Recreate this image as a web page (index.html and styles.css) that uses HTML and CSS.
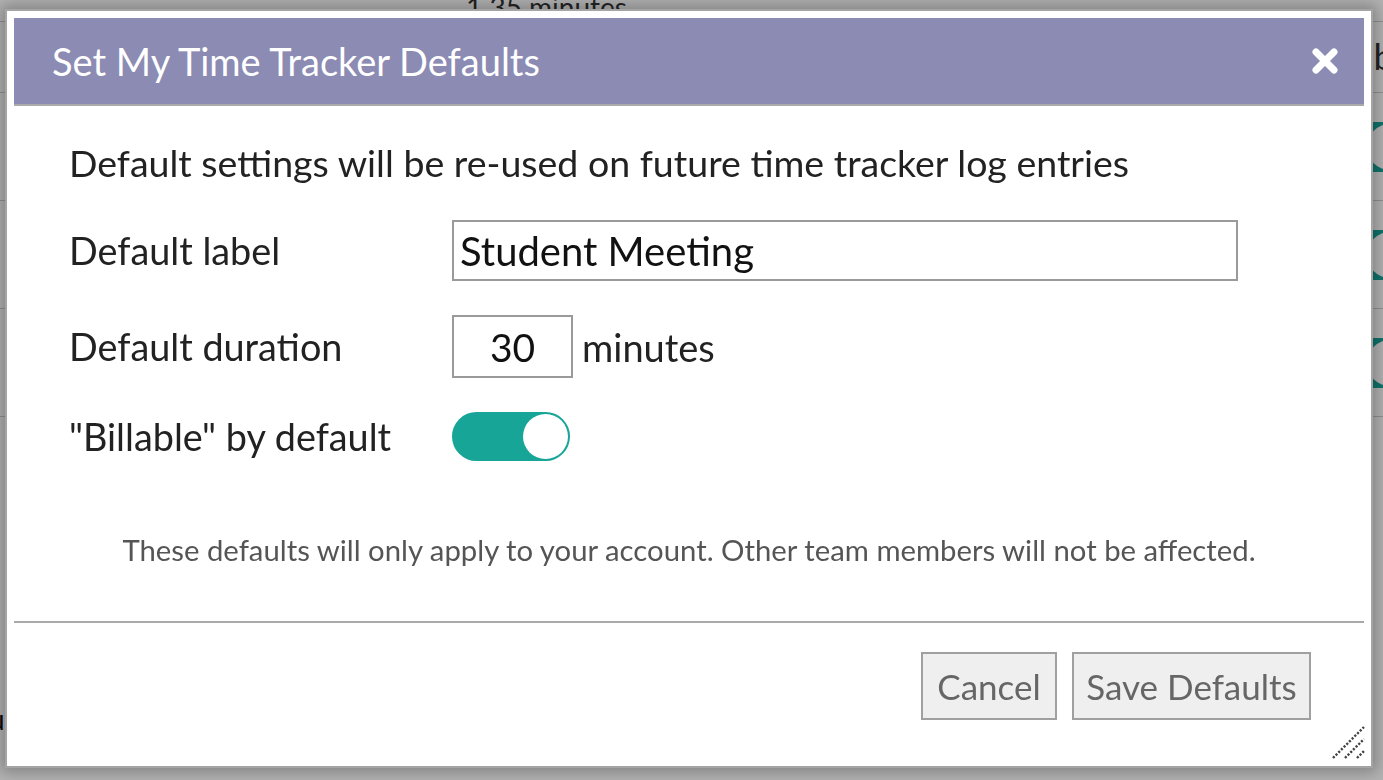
FILE: index.html
```html
<!DOCTYPE html>
<html lang="en">
<head>
<meta charset="utf-8">
<title>Set My Time Tracker Defaults</title>
<link rel="stylesheet" href="styles.css">
</head>
<body>
<div class="page">
  <div class="summary">1 35 minutes</div>
  <div class="rows">
    <div class="row head"><div class="main"></div><div class="side"><span class="colhead">Billable</span></div></div>
    <div class="row"><div class="main"></div><div class="side"><span class="sw"><span class="sw-knob"></span></span></div></div>
    <div class="row"><div class="main"></div><div class="side"><span class="sw"><span class="sw-knob"></span></span></div></div>
    <div class="row"><div class="main"></div><div class="side"><span class="sw"><span class="sw-knob"></span></span></div></div>
    <div class="tail"><span class="cut">u</span></div>
  </div>
</div>
<div class="overlay"></div>
<div class="dialog" role="dialog">
  <div class="titlebar">
    <span class="title">Set My Time Tracker Defaults</span>
    <button class="close" aria-label="Close">
      <svg width="26" height="26" viewBox="0 0 26 26"><path d="M4 4 L22 22 M22 4 L4 22" stroke="#fff" stroke-width="7" stroke-linecap="round" fill="none"/></svg>
    </button>
  </div>
  <div class="content">
    <p class="intro">Default settings will be re-used on future time tracker log entries</p>
    <div class="form">
      <label class="lbl">Default label</label>
      <div class="field"><input class="text" type="text" value="Student Meeting"></div>
      <label class="lbl">Default duration</label>
      <div class="field"><input class="num" type="text" value="30"><span class="unit">minutes</span></div>
      <label class="lbl">"Billable" by default</label>
      <div class="field"><span class="toggle"><span class="knob"></span></span></div>
    </div>
    <p class="note">These defaults will only apply to your account. Other team members will not be affected.</p>
  </div>
  <div class="footer">
    <button class="btn btn-cancel">Cancel</button>
    <button class="btn btn-save">Save Defaults</button>
  </div>
  <svg class="grip" width="34" height="34" viewBox="0 0 34 34">
    <path d="M1 32 L32 1 M13 32 L32 13 M25 32 L32 25" stroke="#444" stroke-width="2.4" stroke-dasharray="2.2 1.6" fill="none"/>
  </svg>
</div>
</body>
</html>
```
FILE: styles.css
```css
* { box-sizing: border-box; }
html, body { margin: 0; padding: 0; }
body {
  width: 1383px;
  height: 780px;
  overflow: hidden;
  background: #fff;
  font-family: Lato, "Open Sans", sans-serif;
  color: #222;
}

/* background page */
.summary {
  font-size: 28px;
  line-height: 14px;
  height: 21px;
  padding-left: 466px;
  color: #333;
}
.rows { display: flex; flex-direction: column; }
.row {
  display: grid;
  grid-template-columns: 1297px 1fr;
  height: 108px;
  border-top: 1px solid #cfcfcf;
  align-items: center;
}
.row.head { height: 71px; align-items: start; }
.colhead {
  display: block;
  font-size: 36px;
  line-height: 44px;
  padding: 12px 0 0 10px;
  color: #333;
}
.sw {
  display: flex;
  justify-content: flex-end;
  align-items: center;
  width: 118px;
  height: 50px;
  border-radius: 25px;
  background: #17a598;
  padding: 2px;
}
.sw-knob { width: 46px; height: 46px; border-radius: 50%; background: #fff; }
.tail {
  height: 364px;
  border-top: 1px solid #cfcfcf;
  display: flex;
  align-items: flex-end;
}
.cut {
  font-size: 28px;
  line-height: 28px;
  color: #111;
  margin-left: -11px;
  padding-bottom: 47px;
}

.overlay {
  position: fixed;
  inset: 0;
  background: rgba(0, 0, 0, 0.3);
}

/* dialog */
.dialog {
  position: fixed;
  left: 5px;
  top: 9px;
  width: 1368px;
  height: 759px;
  background: #fff;
  border: 2px solid #a4a4a4;
  padding: 7px;
  display: flex;
  flex-direction: column;
  box-shadow: 0 0 14px 4px rgba(0, 0, 0, 0.28);
}
.titlebar {
  height: 88px;
  flex: none;
  background: #8b8bb3;
  border-bottom: 2px solid #aaa;
  display: flex;
  align-items: center;
  justify-content: space-between;
  padding: 0 26px 0 38px;
}
.title {
  color: #fff;
  font-size: 38px;
  line-height: 44px;
}
.close {
  width: 26px;
  height: 26px;
  padding: 0;
  border: 0;
  background: none;
  display: flex;
}
.content {
  flex: 1;
  padding: 35px 0 0 55px;
}
.intro {
  margin: 0;
  font-size: 37.5px;
  line-height: 44px;
  color: #222;
}
.form {
  display: grid;
  grid-template-columns: 383px 1fr;
  row-gap: 34px;
  align-items: center;
  margin-top: 35px;
}
.lbl {
  font-size: 37.8px;
  line-height: 44px;
  color: #222;
}
.field { display: flex; align-items: center; gap: 9px; }
.text, .num {
  font-family: inherit;
  font-size: 40px;
  color: #111;
  border: 2px solid #9a9a9a;
  background: #fff;
  margin: 0;
  outline: none;
}
.text { width: 786px; height: 61px; padding: 0 6px; }
.num { width: 121px; height: 63px; text-align: center; padding: 0; font-size: 39px; }
.unit { font-size: 38px; line-height: 44px; color: #222; }
.toggle {
  display: flex;
  justify-content: flex-end;
  align-items: center;
  width: 118px;
  height: 49px;
  border-radius: 25px;
  background: #17a598;
  padding: 2px;
}
.knob {
  width: 45px;
  height: 45px;
  border-radius: 50%;
  background: #fff;
}
.note {
  margin: 71px 0 0 -55px;
  text-align: center;
  font-size: 29.3px;
  line-height: 36px;
  color: #555;
}
.footer {
  flex: none;
  height: 138px;
  border-top: 2px solid #aaa;
  display: flex;
  justify-content: flex-end;
  align-items: flex-start;
  gap: 15px;
  padding: 29px 53px 0 0;
}
.btn {
  height: 68px;
  font-family: inherit;
  font-size: 35px;
  color: #666;
  background: #efefef;
  border: 2px solid #a0a0a0;
  padding: 0;
  margin: 0;
  text-align: center;
}
.btn-cancel { width: 136px; }
.btn-save { width: 239px; }
.grip {
  position: absolute;
  right: 5px;
  bottom: 6px;
}
```
